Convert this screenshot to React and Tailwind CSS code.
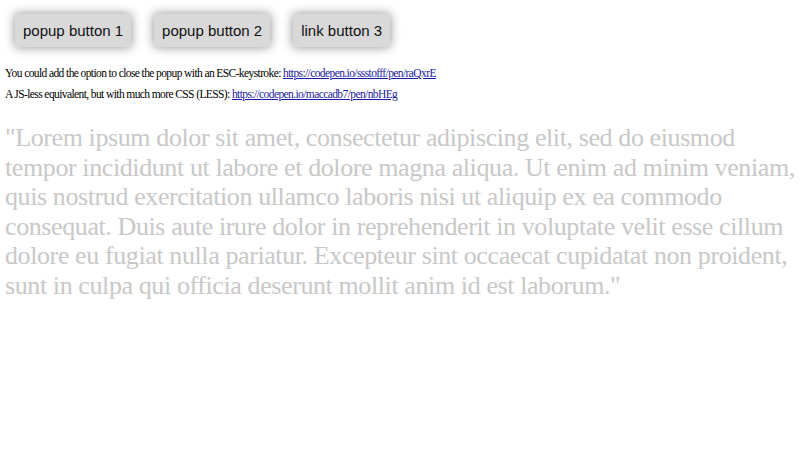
import React from 'react';

const buttons = ['popup button 1', 'popup button 2', 'link button 3'];

export default function App() {
  return (
    <div className="min-h-[450px] bg-white px-[5px] font-['Liberation_Serif',serif] text-black">
      {/* button row */}
      <div className="flex gap-[23px] pl-[10px] pt-[14px]">
        {buttons.map((label) => (
          <button
            key={label}
            className="bg-[#d9d9d9] px-2 py-[7px] font-['Liberation_Sans',Arial,sans-serif] text-[15px] leading-[19px] text-[#111] shadow-[0_0_10px_rgba(0,0,0,0.45)]"
          >
            {label}
          </button>
        ))}
      </div>

      <p className="mt-[19px] text-[11.5px] leading-[14px] tracking-[-0.6px]">
        You could add the option to close the popup with an ESC-keystroke:{' '}
        <a href="#" className="text-[#1a1aa6] underline">
          https://codepen.io/ssstofff/pen/raQxrE
        </a>
      </p>
      <p className="mt-[7px] text-[11.5px] leading-[14px] tracking-[-0.6px]">
        A JS-less equivalent, but with much more CSS (LESS):{' '}
        <a href="#" className="text-[#1a1aa6] underline">
          https://codepen.io/maccadb7/pen/nbHEg
        </a>
      </p>

      <p className="mt-[22px] text-[26px] leading-[29.5px] tracking-[-0.4px] text-[#c8c8c8]">
        "Lorem ipsum dolor sit amet, consectetur adipiscing elit, sed do eiusmod tempor incididunt ut labore et dolore magna aliqua. Ut enim ad minim veniam, quis nostrud exercitation ullamco laboris nisi ut aliquip ex ea commodo consequat. Duis aute irure dolor in reprehenderit in voluptate velit esse cillum dolore eu fugiat nulla pariatur. Excepteur sint occaecat cupidatat non proident, sunt in culpa qui officia deserunt mollit anim id est laborum."
      </p>
    </div>
  );
}
